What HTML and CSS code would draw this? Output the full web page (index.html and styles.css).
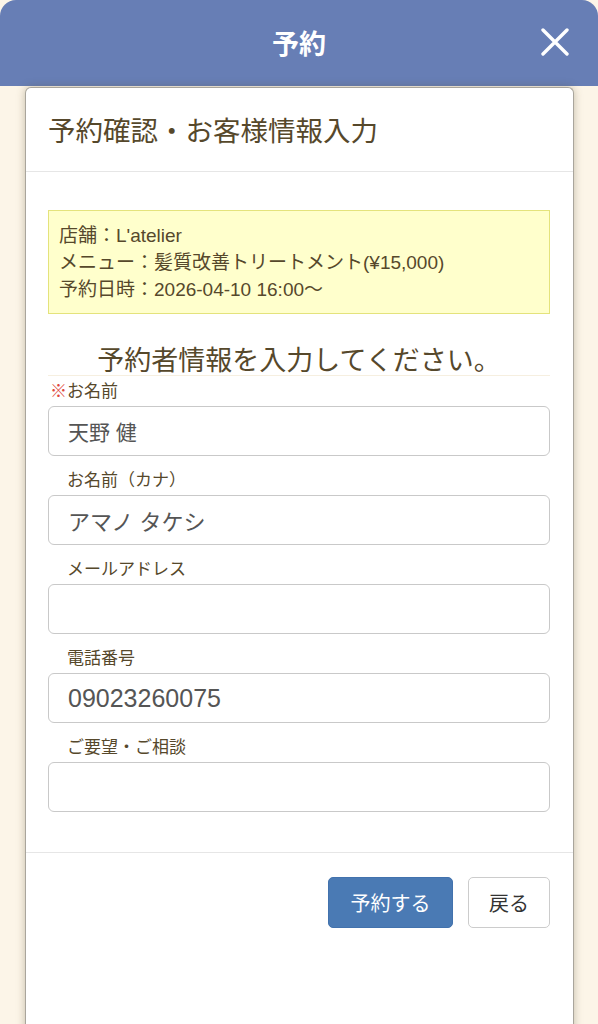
FILE: index.html
```html
<!DOCTYPE html>
<html lang="ja">
<head>
<meta charset="utf-8">
<title>予約</title>
<link rel="stylesheet" href="styles.css">
</head>
<body>
<header class="topbar">
  <span class="topbar-side"></span>
  <h1 class="topbar-title">予約</h1>
  <span class="topbar-side topbar-close">
    <svg width="28" height="28" viewBox="0 0 28 28" aria-label="閉じる"><path d="M2 2 L26 26 M26 2 L2 26" stroke="#fff" stroke-width="3.4" stroke-linecap="round" fill="none"/></svg>
  </span>
</header>
<main class="card">
  <div class="card-head">
    <h2 class="card-title">予約確認・お客様情報入力</h2>
  </div>
  <div class="card-body">
    <div class="summary">
      <div>店舗：L'atelier</div>
      <div>メニュー：髪質改善トリートメント(¥15,000)</div>
      <div>予約日時：2026-04-10 16:00〜</div>
    </div>
    <h3 class="section-title">予約者情報を入力してください。</h3>
    <div class="field field-first">
      <label class="field-label"><span class="mark req">※</span>お名前</label>
      <div class="field-input val-kanji">天野 健</div>
    </div>
    <div class="field">
      <label class="field-label"><span class="mark"></span>お名前（カナ）</label>
      <div class="field-input">アマノ タケシ</div>
    </div>
    <div class="field">
      <label class="field-label"><span class="mark"></span>メールアドレス</label>
      <div class="field-input"></div>
    </div>
    <div class="field">
      <label class="field-label"><span class="mark"></span>電話番号</label>
      <div class="field-input val-num">09023260075</div>
    </div>
    <div class="field">
      <label class="field-label"><span class="mark"></span>ご要望・ご相談</label>
      <div class="field-input"></div>
    </div>
  </div>
  <div class="card-foot">
    <button class="btn btn-primary">予約する</button>
    <button class="btn btn-default">戻る</button>
  </div>
</main>
</body>
</html>
```
FILE: styles.css
```css
* { box-sizing: border-box; }
html, body { margin: 0; padding: 0; }
body {
  background: #fcf5e8;
  font-family: "Liberation Sans", "Noto Sans CJK JP", sans-serif;
  color: #56482b;
  overflow: hidden;
  height: 1024px;
}
.topbar {
  height: 86px;
  background: #677eb5;
  border-radius: 16px 16px 0 0;
  display: grid;
  grid-template-columns: 1fr auto 1fr;
  align-items: center;
}
.topbar-title {
  margin: 0;
  color: #fff;
  font-size: 27px;
  font-weight: bold;
  font-family: "Noto Sans CJK JP", sans-serif;
  line-height: 30px;
}
.topbar-close {
  justify-self: end;
  padding-right: 29px;
  display: flex;
  align-items: center;
  padding-bottom: 2px;
}
.card {
  margin: 1px 24px 0 25px;
  background: #fff;
  border: 1px solid #a9a59c;
  border-bottom: none;
  border-radius: 6px 6px 0 0;
  box-shadow: 0 0 9px rgba(90, 80, 50, 0.35);
  min-height: 1000px;
}
.card-head {
  padding: 25px 22px 26px;
  border-bottom: 1px solid #e6e6e6;
}
.card-title {
  margin: 0;
  font-size: 27.5px;
  line-height: 32px;
  font-weight: normal;
  font-family: "Noto Sans CJK JP", sans-serif;
  color: #56482b;
}
.card-body {
  padding: 38px 23px 40px 22px;
}
.summary {
  background: #ffffcc;
  border: 1px solid #e4e37c;
  padding: 11px 10px 10px;
  font-size: 19px;
  line-height: 27px;
  color: #56482b;
}
.section-title {
  margin: 29px 0 0;
  text-align: center;
  font-size: 27px;
  line-height: 32px;
  font-weight: normal;
  font-family: "Noto Sans CJK JP", sans-serif;
  color: #56482b;
  border-bottom: 1px solid #f6efe0;
}
.field { margin-top: 13px; }
.field.field-first { margin-top: 4px; }
.field-label {
  display: block;
  padding-left: 2px;
  padding-bottom: 2px;
  font-size: 17px;
  line-height: 24px;
  color: #56482b;
}
.mark {
  display: inline-block;
  width: 17px;
}
.mark.req { color: #e0473c; }
.field-input {
  height: 50px;
  border: 1px solid #c9c9c9;
  border-radius: 6px;
  padding: 0 19px;
  display: flex;
  align-items: center;
  font-size: 22px;
  color: #555;
  background: #fff;
}
.field-input.val-kanji { font-size: 21px; }
.field-input.val-num { font-size: 25px; }
.card-foot {
  border-top: 1px solid #e6e6e6;
  padding: 24px 23px 0;
  display: flex;
  justify-content: flex-end;
  gap: 15px;
}
.btn {
  height: 51px;
  border-radius: 5px;
  font-size: 20px;
  font-family: "Noto Sans CJK JP", sans-serif;
  padding: 0 18px;
  cursor: pointer;
}
.btn-primary {
  width: 125px;
  background: #4a7ab4;
  border: 1px solid #4272ad;
  color: #fff;
}
.btn-default {
  width: 82px;
  background: #fff;
  border: 1px solid #cccccc;
  color: #333;
}
```
